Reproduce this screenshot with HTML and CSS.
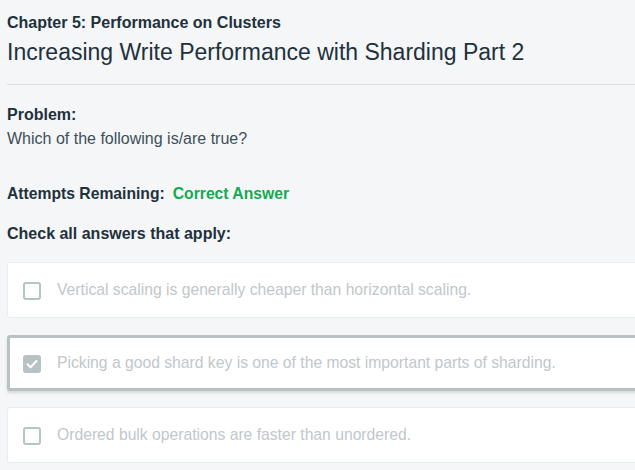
FILE: index.html
```html
<!DOCTYPE html>
<html>
<head>
<meta charset="utf-8">
<link rel="stylesheet" href="styles.css">
</head>
<body>
<main class="page">
  <header class="head">
    <div class="chapter">Chapter 5: Performance on Clusters</div>
    <h1 class="title">Increasing Write Performance with Sharding Part 2</h1>
  </header>
  <section class="problem">
    <div class="label">Problem:</div>
    <div class="question">Which of the following is/are true?</div>
  </section>
  <div class="attempts"><span class="label">Attempts Remaining:</span><span class="correct">Correct Answer</span></div>
  <div class="label check-all">Check all answers that apply:</div>
  <ul class="answers">
    <li class="answer"><span class="box"></span><span class="text">Vertical scaling is generally cheaper than horizontal scaling.</span></li>
    <li class="answer selected"><span class="box checked"><svg viewBox="0 0 18 18" width="18" height="18"><path d="M4.5 9.2 L7.6 12.2 L13.5 6" fill="none" stroke="#fff" stroke-width="2" stroke-linecap="round" stroke-linejoin="round"/></svg></span><span class="text">Picking a good shard key is one of the most important parts of sharding.</span></li>
    <li class="answer"><span class="box"></span><span class="text">Ordered bulk operations are faster than unordered.</span></li>
  </ul>
</main>
</body>
</html>
```
FILE: styles.css
```css
html, body {
  margin: 0;
  padding: 0;
  background: #f5f6f8;
  overflow: hidden;
}
body {
  font-family: "Liberation Sans", Arial, sans-serif;
  color: #21313c;
}
.page {
  width: 700px;
  padding: 13px 0 0 7px;
}
.head {
  border-bottom: 1px solid #d8e1e0;
  padding-bottom: 18px;
}
.chapter {
  font-size: 16px;
  font-weight: bold;
  line-height: 20px;
}
.title {
  margin: 5px 0 0;
  font-size: 23px;
  font-weight: normal;
  line-height: 28px;
}
.problem {
  margin-top: 20px;
}
.label {
  font-size: 16px;
  font-weight: bold;
  line-height: 20px;
}
.attempts .label {
  font-size: 15.7px;
}
.question {
  font-size: 16px;
  line-height: 20px;
  margin-top: 4px;
  color: #3d4f58;
}
.attempts {
  margin-top: 35px;
  display: flex;
  gap: 8px;
}
.correct {
  color: #13aa52;
  font-weight: bold;
  font-size: 15.7px;
  line-height: 20px;
}
.check-all {
  margin-top: 20px;
}
.answers {
  list-style: none;
  margin: 18px 0 0;
  padding: 0;
  display: flex;
  flex-direction: column;
  gap: 16.5px;
}
.answer {
  box-sizing: border-box;
  height: 56px;
  background: #fff;
  border: 1px solid #e7eef0;
  border-radius: 3px;
  display: flex;
  align-items: center;
  padding-left: 15px;
  gap: 16px;
}
.answer.selected {
  border: 3px solid #b8c1c4;
  padding-left: 13px;
  box-shadow: 0 2px 3px rgba(0,0,0,0.12);
}
.box {
  box-sizing: border-box;
  width: 18px;
  height: 18px;
  border: 2px solid #b8c4c2;
  border-radius: 3px;
  flex: none;
  margin-top: 2px;
}
.box.checked {
  border: none;
  background: #b8c1c4;
}
.box svg {
  display: block;
}
.text {
  font-size: 15.7px;
  color: #c1c7cb;
}
```
